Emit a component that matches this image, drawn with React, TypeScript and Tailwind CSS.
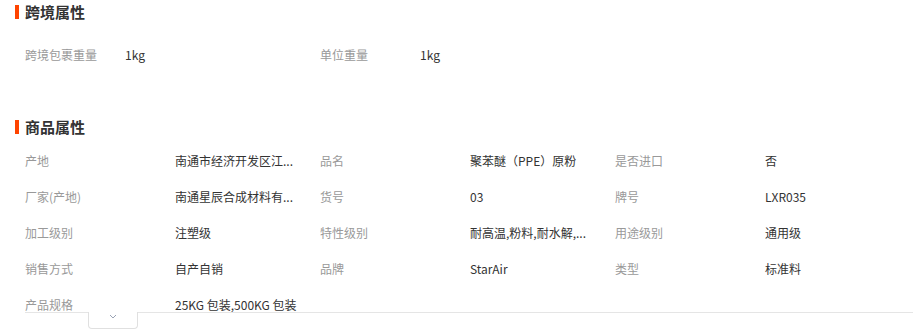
const CROSS_BORDER = [
  { label: "跨境包裹重量", value: "1kg" },
  { label: "单位重量", value: "1kg" },
];

// values are shown already shortened, the way the page lists them
const PRODUCT_ATTRS = [
  { label: "产地", value: "南通市经济开发区江..." },
  { label: "品名", value: "聚苯醚（PPE）原粉" },
  { label: "是否进口", value: "否" },
  { label: "厂家(产地)", value: "南通星辰合成材料有..." },
  { label: "货号", value: "03" },
  { label: "牌号", value: "LXR035" },
  { label: "加工级别", value: "注塑级" },
  { label: "特性级别", value: "耐高温,粉料,耐水解,..." },
  { label: "用途级别", value: "通用级" },
  { label: "销售方式", value: "自产自销" },
  { label: "品牌", value: "StarAir" },
  { label: "类型", value: "标准料" },
  { label: "产品规格", value: "25KG 包装,500KG 包装" },
];

function SectionTitle({ title }: { title: string }) {
  return (
    <div className="flex h-[24px] items-center pl-[15px]">
      <span className="h-[14px] w-[4px] bg-[#ff4400]" />
      <h2 className="mb-[2px] ml-[6px] text-[15px] font-bold leading-none text-[#333]">{title}</h2>
    </div>
  );
}

export default function App() {
  return (
    <div
      className="h-[333px] w-[924px] bg-white"
      style={{ fontFamily: '"Noto Sans CJK SC", "Noto Sans", sans-serif' }}
    >
      <SectionTitle title="跨境属性" />
      <div className="ml-[25px] mt-[13px] grid grid-cols-[295px_295px_295px]">
        {CROSS_BORDER.map((item) => (
          <div key={item.label} className="flex h-[36px] items-center text-[12px]">
            <span className="w-[100px] shrink-0 text-[#999]">{item.label}</span>
            <span className="text-[#333]">{item.value}</span>
          </div>
        ))}
      </div>

      <div className="mt-[42px]">
        <SectionTitle title="商品属性" />
      </div>
      <div className="ml-[25px] mr-[11px] mt-[4px]">
        <div className="h-[170px] overflow-hidden border-b border-[#e5e5e5]">
          <div className="grid grid-cols-[295px_295px_295px]">
            {PRODUCT_ATTRS.map((item) => (
              <div key={item.label} className="flex h-[36px] items-center text-[12px]">
                <span className="w-[150px] shrink-0 text-[#999]">{item.label}</span>
                <span className="whitespace-nowrap text-[#333]">{item.value}</span>
              </div>
            ))}
          </div>
        </div>
        <div className="-mt-px ml-[63px] flex h-[17px] w-[50px] justify-center rounded-b-[4px] border-x border-b border-[#e0e0e0] bg-white pt-[2px]">
          <svg width="8" height="5" viewBox="0 0 8 5" fill="none">
            <path d="M1 1l3 3 3-3" stroke="#9aa3b5" strokeWidth="1" />
          </svg>
        </div>
      </div>
    </div>
  );
}
